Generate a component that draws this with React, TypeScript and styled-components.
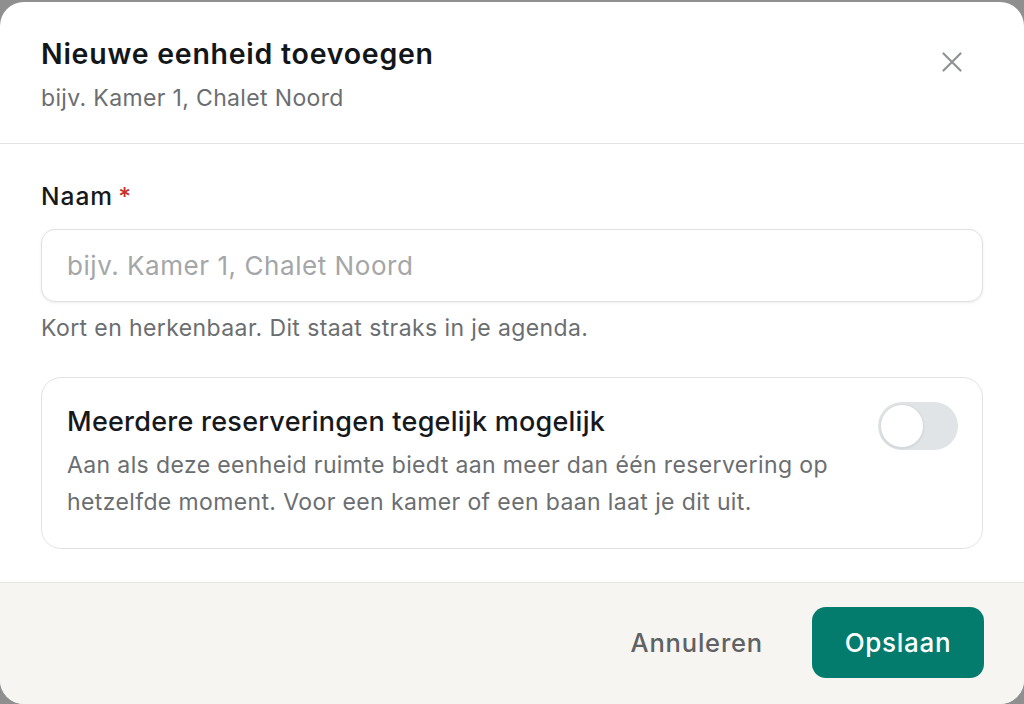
import React, { useState } from "react";
import styled, { createGlobalStyle } from "styled-components";

const Global = createGlobalStyle`
  html, body { margin: 0; padding: 0; background: #8f8f8f; }
  body { font-family: Inter, "Noto Sans", "Liberation Sans", sans-serif; -webkit-font-smoothing: antialiased; }
  * { box-sizing: border-box; }
`;

const Dialog = styled.div`
  margin-top: 2px;
  width: 1024px;
  height: 702px;
  background: #ffffff;
  border-radius: 24px;
  overflow: hidden;
  display: flex;
  flex-direction: column;
`;

const Header = styled.header`
  display: flex;
  justify-content: space-between;
  align-items: flex-start;
  padding: 35px 41px 31px 41px;
  border-bottom: 1px solid #e4e4e4;
`;

const TitleBlock = styled.div`
  display: flex;
  flex-direction: column;
  gap: 13px;
`;

const Title = styled.h2`
  margin: 0;
  font-size: 28.5px;
  line-height: 34px;
  font-weight: 600;
  color: #131619;
  letter-spacing: 0.75px;
`;

const Subtitle = styled.p`
  margin: 0;
  font-size: 23px;
  line-height: 28px;
  color: #6b6e71;
  letter-spacing: 0.35px;
`;

const CloseButton = styled.button`
  border: none;
  background: transparent;
  padding: 0;
  margin: 15px 21px 0 0;
  width: 20px;
  height: 20px;
  display: flex;
  align-items: center;
  justify-content: center;
  color: #8f9294;
  cursor: pointer;
`;

const Body = styled.div`
  flex: 1;
  padding: 38px 41px 33px 41px;
  display: flex;
  flex-direction: column;
`;

const Label = styled.label`
  font-size: 24.5px;
  line-height: 28px;
  font-weight: 500;
  color: #16191c;
  letter-spacing: 1px;
`;

const Required = styled.span`
  color: #c9302c;
  margin-left: 5px;
`;

const Input = styled.input`
  margin-top: 19px;
  height: 73px;
  width: 100%;
  border: 1px solid #e0e0e0;
  border-radius: 14px;
  padding: 0 25px;
  font-family: inherit;
  font-size: 26px;
  letter-spacing: 0.55px;
  color: #16191c;
  background: #fff;
  box-shadow: 0 1px 3px rgba(0, 0, 0, 0.07);
  outline: none;
  &::placeholder { color: #a4a6a8; }
`;

const Help = styled.p`
  margin: 13px 0 0 0;
  font-size: 23px;
  line-height: 26px;
  letter-spacing: 0.4px;
  color: #6b6e71;
`;

const Card = styled.div`
  margin-top: 36px;
  height: 172px;
  border: 1px solid #e2e2e2;
  border-radius: 20px;
  padding: 24px 24px 0 25px;
  display: flex;
  justify-content: space-between;
  align-items: flex-start;
`;

const CardText = styled.div`
  padding-top: 5px;
  display: flex;
  flex-direction: column;
`;

const CardTitle = styled.div`
  font-size: 27px;
  line-height: 30px;
  font-weight: 500;
  letter-spacing: 0.25px;
  color: #16191c;
`;

const CardDesc = styled.p`
  margin: 10px 0 0 0;
  font-size: 23px;
  line-height: 37px;
  letter-spacing: 0.38px;
  color: #6b6e71;
`;

const Track = styled.button<{ $on: boolean }>`
  flex: none;
  width: 80px;
  height: 48px;
  border-radius: 24px;
  border: none;
  padding: 2px;
  background: ${(p) => (p.$on ? "#037c6e" : "#e1e4e7")};
  display: flex;
  justify-content: ${(p) => (p.$on ? "flex-end" : "flex-start")};
  cursor: pointer;
`;

const Knob = styled.span`
  width: 44px;
  height: 44px;
  border-radius: 50%;
  background: #fff;
  border: 1px solid #d9dbdd;
  box-shadow: 0 1px 2px rgba(0, 0, 0, 0.08);
`;

const Footer = styled.footer`
  height: 122px;
  background: #f6f5f2;
  border-top: 1px solid #e4e4e4;
  display: flex;
  justify-content: flex-end;
  align-items: flex-start;
  padding: 24px 40px 0 0;
  gap: 49px;
`;

const GhostButton = styled.button`
  border: none;
  background: transparent;
  height: 71px;
  padding: 0;
  font-family: inherit;
  font-size: 25.5px;
  letter-spacing: 0.8px;
  font-weight: 500;
  color: #5f6163;
  cursor: pointer;
`;

const PrimaryButton = styled.button`
  border: none;
  background: #037c6e;
  height: 71px;
  width: 172px;
  border-radius: 14px;
  font-family: inherit;
  font-size: 26px;
  letter-spacing: 0.7px;
  font-weight: 500;
  color: #ffffff;
  cursor: pointer;
`;

export default function App() {
  const [on, setOn] = useState(false);
  return (
    <>
      <Global />
      <Dialog>
        <Header>
          <TitleBlock>
            <Title>Nieuwe eenheid toevoegen</Title>
            <Subtitle>bijv. Kamer 1, Chalet Noord</Subtitle>
          </TitleBlock>
          <CloseButton aria-label="Sluiten">
            <svg width="20" height="20" viewBox="0 0 20 20" fill="none" stroke="currentColor" strokeWidth="2.2" strokeLinecap="round">
              <path d="M1.5 1.5L18.5 18.5M18.5 1.5L1.5 18.5" />
            </svg>
          </CloseButton>
        </Header>
        <Body>
          <Label>
            Naam<Required>*</Required>
          </Label>
          <Input placeholder="bijv. Kamer 1, Chalet Noord" />
          <Help>Kort en herkenbaar. Dit staat straks in je agenda.</Help>
          <Card>
            <CardText>
              <CardTitle>Meerdere reserveringen tegelijk mogelijk</CardTitle>
              <CardDesc>
                Aan als deze eenheid ruimte biedt aan meer dan één reservering op
                <br />
                hetzelfde moment. Voor een kamer of een baan laat je dit uit.
              </CardDesc>
            </CardText>
            <Track $on={on} onClick={() => setOn(!on)} aria-label="Meerdere reserveringen">
              <Knob />
            </Track>
          </Card>
        </Body>
        <Footer>
          <GhostButton>Annuleren</GhostButton>
          <PrimaryButton>Opslaan</PrimaryButton>
        </Footer>
      </Dialog>
    </>
  );
}
